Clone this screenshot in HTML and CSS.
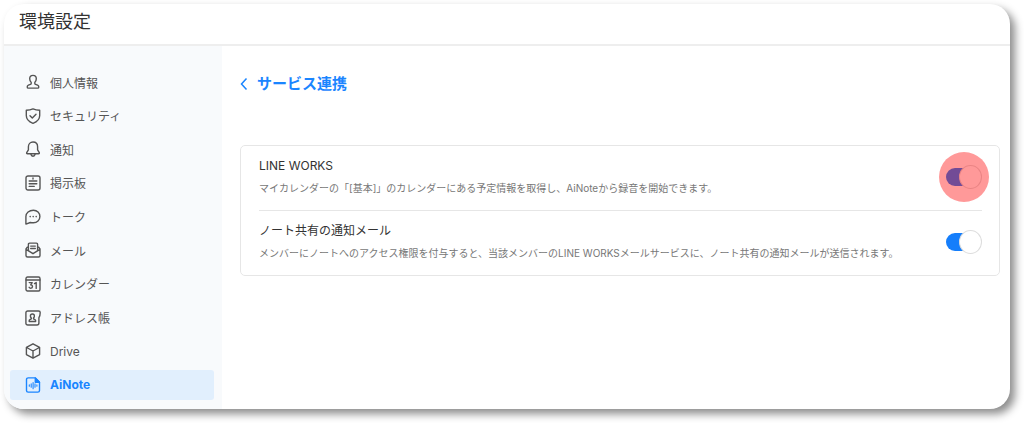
FILE: index.html
```html
<!DOCTYPE html>
<html lang="ja">

<head>
    <meta charset="UTF-8">
    <meta name="viewport" content="width=device-width, initial-scale=1.0">
    <title>環境設定</title>
    <link rel="stylesheet" href="styles.css">
</head>

<body>
    <div class="window">
        <header class="header">
            <h1>環境設定</h1>
        </header>
        <div class="body">
            <nav class="sidebar">
                <a href="#" class="menu-item">
                    <svg class="icon" viewBox="0 0 16 16"><path d="M6.2 8.4C5.2 7.300 4.700 6 4.700 4.700a3.300 3.300 0 0 1 6.600 0c0 1.300-.5 2.600-1.500 3.700v1c0 .5.3.8.8 1l2 .8c.8.3 1.200.9 1.200 1.700 0 .7-.5 1.200-1.200 1.200H3.400c-.7 0-1.200-.5-1.200-1.200 0-.8.4-1.400 1.200-1.700l2-.8c.5-.2.8-.5.8-1z"/></svg>
                    <span>個人情報</span>
                </a>
                <a href="#" class="menu-item">
                    <svg class="icon" viewBox="0 0 16 16"><path d="M8 .9c2 .9 4.2 1.3 6.7 1.3v5.300c0 3.700-2.700 6.300-6.700 7.800-4-1.500-6.700-4.100-6.700-7.800V2.200C3.800 2.200 6 1.800 8 .9z"/><path d="M5 7.700l2.300 2.300L11 6.200"/></svg>
                    <span>セキュリティ</span>
                </a>
                <a href="#" class="menu-item">
                    <svg class="icon" viewBox="0 0 16 16"><path d="M8 1C5.200 1 3.400 3.100 3.400 5.800v3l-1.700 2.800c-.3.600 0 1.200.7 1.200h11.200c.7 0 1-.6.7-1.200l-1.700-2.800v-3C12.600 3.100 10.800 1 8 1z"/><path d="M5.900 13.200c.2 1.200 1 2 2.100 2s1.900-.8 2.100-2"/></svg>
                    <span>通知</span>
                </a>
                <a href="#" class="menu-item">
                    <svg class="icon" viewBox="0 0 16 16"><rect x="1" y="1" width="14" height="14" rx="2"/><path d="M4.200 6h7.600M4.200 8.700h7.600M4.200 11.400h5M8 3v1"/></svg>
                    <span>掲示板</span>
                </a>
                <a href="#" class="menu-item">
                    <svg class="icon" viewBox="0 0 16 16"><path d="M8.400 1.200c3.700 0 6.500 2.800 6.500 6.300s-2.800 6.300-6.500 6.300c-1.200 0-2.100-.1-3.100-.3L.9 15.100V7.500c0-3.500 3.300-6.300 7.500-6.300z"/><path class="dots" d="M5.200 7.600h0M8.200 7.600h0M11.200 7.600h0"/></svg>
                    <span>トーク</span>
                </a>
                <a href="#" class="menu-item">
                    <svg class="icon" viewBox="0 0 16 16"><path d="M3.400 5.200H2.300L1 7v6.500c0 .9.600 1.500 1.500 1.500h11c.9 0 1.500-.6 1.500-1.500V7l-1.300-1.800h-1.100M1.100 7.300L8 11.700l6.900-4.400"/><path d="M3.400 8.400V2.300c0-.7.500-1.200 1.200-1.200h6.800c.7 0 1.200.5 1.200 1.200v6.100M5.700 4.100h4.600M5.700 6.500h4.600"/></svg>
                    <span>メール</span>
                </a>
                <a href="#" class="menu-item">
                    <svg class="icon" viewBox="0 0 16 16"><rect x="1" y="1" width="14" height="14" rx="1.500"/><path d="M1 4h14"/><path d="M4.200 6.600h3L5.700 8.900c1.200 0 1.800.7 1.800 1.600 0 1-.7 1.700-1.700 1.700-.8 0-1.400-.3-1.700-.9M9.500 7.600l1.700-1v5.800"/></svg>
                    <span>カレンダー</span>
                </a>
                <a href="#" class="menu-item">
                    <svg class="icon" viewBox="0 0 16 16"><path d="M2.700 1h10.800c1 0 1.700.7 1.700 1.600 0 1.900-.2 3.800-1.300 5.100V13c0 1.200-.8 2-1.900 2H2.700c-1 0-1.800-.8-1.800-1.800V2.800c0-1 .8-1.800 1.800-1.800z"/><path d="M6.300 8.100c-.6-.6-.9-1.300-.9-2.100 0-1.100.9-2 2-2s2 .9 2 2c0 .8-.3 1.500-.9 2.100v.7l1.500.8c.4.200.6.500.6 1v.9H4.200v-.9c0-.5.200-.8.600-1l1.500-.8z"/></svg>
                    <span>アドレス帳</span>
                </a>
                <a href="#" class="menu-item">
                    <svg class="icon" viewBox="0 0 16 16"><path d="M8 .8l6.600 3.600v7.200L8 15.200l-6.600-3.600V4.400zM1.600 4.500L8 8l6.400-3.500M8 8v7"/></svg>
                    <span>Drive</span>
                </a>
                <a href="#" class="menu-item active">
                    <svg class="icon" viewBox="0 0 16 16"><path d="M10.300.9H3.200c-.9 0-1.700.7-1.700 1.600v11c0 .9.800 1.600 1.700 1.600h9.600c.9 0 1.700-.7 1.700-1.600V5.200z"/><path class="fold" d="M10.300.9v4.300h4.200z"/><path class="wave" d="M4.300 7.900v1.400M6.200 6.900v3.400M8.100 5.500v6.200M10 6.900v3.400M11.900 7.900v1.400"/></svg>
                    <span>AiNote</span>
                </a>
            </nav>

            <main class="content">
                <h2>
                    <a href="#" class="back">
                        <svg class="chevron" viewBox="0 0 8 12"><path d="M6.500 0.500L1.500 6l5 5.500"/></svg>
                        サービス連携
                    </a>
                </h2>
                <div class="card">
                    <div class="setting">
                        <div class="setting-text">
                            <label for="line-works">LINE WORKS</label>
                            <p>マイカレンダーの「[基本]」のカレンダーにある予定情報を取得し、AiNoteから録音を開始できます。</p>
                        </div>
                        <div class="switch highlight">
                            <input type="checkbox" id="line-works" checked>
                        </div>
                    </div>
                    <div class="setting">
                        <div class="setting-text">
                            <label for="share-mail">ノート共有の通知メール</label>
                            <p>メンバーにノートへのアクセス権限を付与すると、当該メンバーのLINE WORKSメールサービスに、ノート共有の通知メールが送信されます。</p>
                        </div>
                        <div class="switch">
                            <input type="checkbox" id="share-mail" checked>
                        </div>
                    </div>
                </div>
            </main>
        </div>
    </div>
</body>

</html>
```
FILE: styles.css
```css
* {
    box-sizing: border-box;
}

body {
    margin: 0;
    padding: 4px 14px 14px 4px;
    min-height: 100vh;
    display: flex;
    background-color: #fff;
    font-family: Inter, 'Noto Sans CJK JP', sans-serif;
    font-size: 12px;
    color: #333;
}

.window {
    flex: 1;
    display: flex;
    flex-direction: column;
    overflow: hidden;
    background-color: #fff;
    border-radius: 20px;
    box-shadow: 5px 5px 8px rgba(0, 0, 0, 0.45);
}

.header {
    padding: 4px 15px 8px;
    border-bottom: 2px solid #eee;
}

h1 {
    margin: 0;
    font-size: 18px;
    font-weight: 400;
    line-height: 28px;
}

.body {
    flex: 1;
    display: flex;
}

/* Sidebar menu */
.sidebar {
    width: 218px;
    flex-shrink: 0;
    display: flex;
    flex-direction: column;
    justify-content: space-between;
    padding: 21px 8px 9px 6px;
    background-color: #f8fafc;
}

.menu-item {
    display: flex;
    align-items: center;
    gap: 9px;
    height: 30px;
    padding: 0 15px;
    border-radius: 3px;
    color: #555;
    text-decoration: none;
}

.menu-item.active {
    background-color: #e1effd;
    color: #1a85ff;
    font-weight: 700;
}

.icon {
    width: 16px;
    height: 16px;
    fill: none;
    stroke: currentColor;
    stroke-width: 1.4;
    stroke-linecap: round;
    stroke-linejoin: round;
}

.icon .dots {
    stroke-width: 1.6;
}

.icon .wave {
    stroke-width: 1.1;
}

.icon .fold {
    fill: currentColor;
}

/* Main area */
.content {
    flex: 1;
    padding: 24px 10px 24px 18px;
}

h2 {
    margin: 0 0 46px;
    font-size: 15px;
    line-height: 28px;
}

.back {
    display: inline-flex;
    align-items: center;
    gap: 9px;
    color: #1a85ff;
    text-decoration: none;
}

.chevron {
    width: 8px;
    height: 12px;
    fill: none;
    stroke: currentColor;
    stroke-width: 1.5;
}

.card {
    padding: 0 17px 0 18px;
    border: 1px solid #e6e6e6;
    border-radius: 5px;
}

.setting {
    display: flex;
    align-items: center;
    justify-content: space-between;
    padding: 9px 0 11px;
}

.setting + .setting {
    border-top: 1px solid #e6e6e6;
}

.setting-text label {
    display: block;
    line-height: 22px;
}

.setting-text p {
    margin: 0;
    font-size: 10px;
    line-height: 22px;
    color: #777;
}

/* Toggle switch */
.switch {
    position: relative;
    display: flex;
    flex-shrink: 0;
}

.switch input {
    appearance: none;
    display: flex;
    align-items: center;
    width: 36px;
    height: 22px;
    margin: 0;
    cursor: pointer;
}

.switch input::before {
    content: "";
    width: 32px;
    height: 18px;
    border-radius: 9px;
    background-color: #aaa;
}

.switch input::after {
    content: "";
    width: 22px;
    height: 22px;
    margin-left: -32px;
    border: 1px solid #ddd;
    border-radius: 50%;
    background-color: #fff;
}

.switch input:checked::before {
    background-color: #157efb;
}

.switch input:checked::after {
    margin-left: -18px;
}

.highlight::after {
    content: "";
    position: absolute;
    inset: -14px -7px;
    border-radius: 50%;
    background-color: rgba(255, 0, 0, 0.4);
    pointer-events: none;
}
```
